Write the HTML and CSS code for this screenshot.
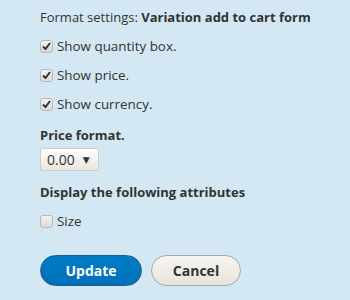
FILE: index.html
```html
<!DOCTYPE html>
<html lang="en">
<head>
  <meta charset="UTF-8">
  <title>Format settings</title>
  <link rel="stylesheet" href="styles.css">
</head>
<body>
  <form class="settings">
    <h3 class="title">Format settings: <strong>Variation add to cart form</strong></h3>

    <label class="check">
      <span class="box"><svg width="9" height="8" viewBox="0 0 9 8"><path d="M1 4.5 L3.5 7 L8 1" fill="none" stroke="#333" stroke-width="2"/></svg></span>
      Show quantity box.
    </label>
    <label class="check">
      <span class="box"><svg width="9" height="8" viewBox="0 0 9 8"><path d="M1 4.5 L3.5 7 L8 1" fill="none" stroke="#333" stroke-width="2"/></svg></span>
      Show price.
    </label>
    <label class="check">
      <span class="box"><svg width="9" height="8" viewBox="0 0 9 8"><path d="M1 4.5 L3.5 7 L8 1" fill="none" stroke="#333" stroke-width="2"/></svg></span>
      Show currency.
    </label>

    <div class="label price">Price format.</div>
    <div class="select">0.00 <span class="arrow">&#9660;</span></div>

    <div class="label attrs">Display the following attributes</div>
    <label class="check">
      <span class="box"></span>
      Size
    </label>

    <div class="actions">
      <button type="button" class="button primary">Update</button>
      <button type="button" class="button">Cancel</button>
    </div>
  </form>
</body>
</html>
```

FILE: styles.css
```css
body {
  margin: 0;
  background: #d3e8f2;
  font-family: "Open Sans", "DejaVu Sans", sans-serif;
  font-size: 13px;
  line-height: 18px;
  color: #333;
}
.settings {
  display: flex;
  flex-direction: column;
  align-items: flex-start;
  padding: 8px 10px 0 40px;
}
.title {
  margin: 0 0 11px;
  font-size: 13px;
  font-weight: normal;
  white-space: nowrap;
}
.title strong { font-weight: bold; }
.check {
  display: flex;
  align-items: center;
  gap: 4px;
  height: 18px;
  margin-bottom: 11px;
  font-size: 13.4px;
}
.box {
  width: 11px;
  height: 11px;
  border: 1px solid #b8b8b8;
  border-radius: 3px;
  background: linear-gradient(#f4f4f4, #d9d9d9);
  display: flex;
  align-items: center;
  justify-content: center;
}
.label { font-weight: bold; }
.price { margin-top: 2px; }
.select {
  display: inline-flex;
  align-items: center;
  gap: 8px;
  box-sizing: border-box;
  height: 23px;
  margin-top: 4px;
  padding: 0 8px 0 6px;
  border: 1px solid #ccc;
  border-radius: 2px;
  background: linear-gradient(#fefefe, #e8e8e0);
  font-size: 14px;
}
.arrow { font-size: 9px; }
.attrs { margin-top: 12px; margin-bottom: 11px; }
.actions {
  display: flex;
  gap: 9px;
  margin-top: 14px;
}
.button {
  width: 90px;
  height: 31px;
  padding: 0;
  border: 1px solid #a6a6a6;
  border-radius: 16px;
  background: linear-gradient(#f6f5f0, #e6e4dc);
  font-family: "Open Sans", "DejaVu Sans", sans-serif;
  font-size: 14px;
  font-weight: bold;
  color: #333;
}
.primary {
  width: 102px;
  border-color: #1e5c90;
  background: linear-gradient(#007bc6, #0071b8);
  color: #fff;
}
```
